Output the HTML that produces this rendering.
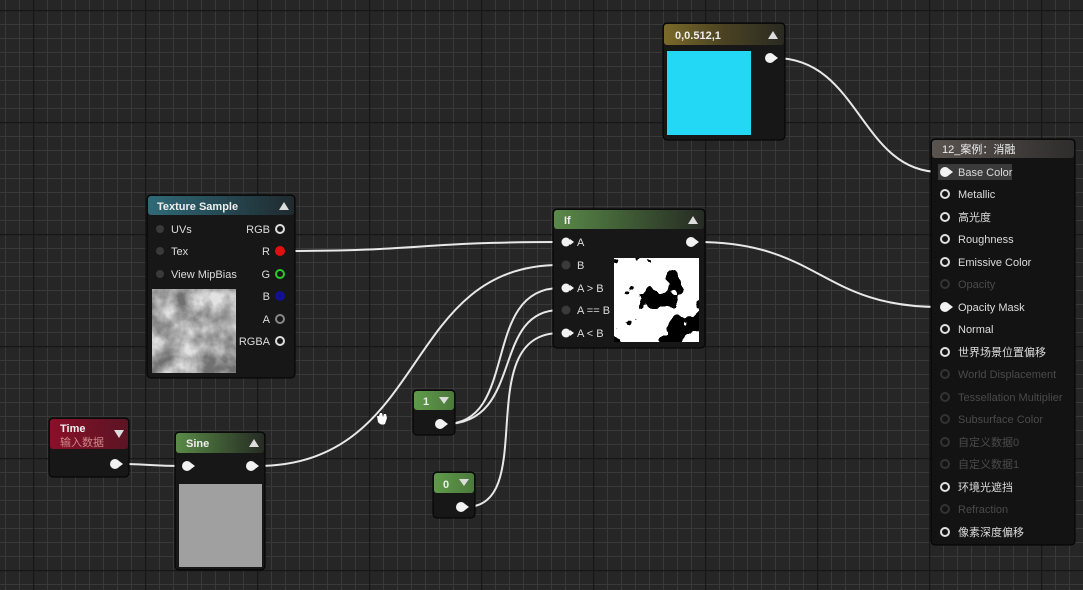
<!DOCTYPE html>
<html><head><meta charset="utf-8"><style>
html,body{margin:0;padding:0;background:#262626;overflow:hidden}
svg{display:block}
text{font-family:"Liberation Sans","Noto Sans CJK SC",sans-serif;font-size:11px;fill:#dcdcdc}
.t{font-weight:bold;font-size:11px;fill:#eee}
.dim{fill:#4a4a4a}
.w{fill:none;stroke:#e8e8e8;stroke-width:2}
</style></head><body>
<svg width="1083" height="590" viewBox="0 0 1083 590" xmlns="http://www.w3.org/2000/svg">
<defs>
<pattern id="g" x="5" y="10" width="14" height="14" patternUnits="userSpaceOnUse"><path d="M0 0.5H14M0.5 0V14" stroke="#393939" stroke-width="1" fill="none"/></pattern>
<pattern id="G" x="33" y="10" width="112" height="112" patternUnits="userSpaceOnUse"><path d="M0 0.5H112M0.5 0V112" stroke="#171717" stroke-width="1.5" fill="none"/></pattern>
<filter id="cloud" x="0" y="0" width="100%" height="100%"><feTurbulence type="fractalNoise" baseFrequency="0.045" numOctaves="4" seed="3"/><feColorMatrix type="matrix" values="0 0 0 0 0  0 0 0 0 0  0 0 0 0 0  1.2 0 0 0 0"/><feComponentTransfer><feFuncA type="linear" slope="1.6" intercept="-0.45"/></feComponentTransfer></filter>
<filter id="mask" x="0" y="0" width="100%" height="100%"><feTurbulence type="fractalNoise" baseFrequency="0.035" numOctaves="3" seed="7"/><feColorMatrix type="matrix" values="0 0 0 0 0  0 0 0 0 0  0 0 0 0 0  1 0 0 0 0"/><feComponentTransfer><feFuncA type="discrete" tableValues="0 0 0 0 0 0 1 1 1 1"/></feComponentTransfer></filter>
<linearGradient id="hgold" x1="0" x2="1"><stop offset="0" stop-color="#7a6a2a"/><stop offset=".5" stop-color="#4a4222"/><stop offset="1" stop-color="#2a2a22"/></linearGradient>
<linearGradient id="hteal" x1="0" x2="1"><stop offset="0" stop-color="#2f6a78"/><stop offset=".6" stop-color="#24434c"/><stop offset="1" stop-color="#202a2e"/></linearGradient>
<linearGradient id="hgreen" x1="0" x2="1"><stop offset="0" stop-color="#5a8a48"/><stop offset=".5" stop-color="#3e5a34"/><stop offset="1" stop-color="#262b24"/></linearGradient>
<linearGradient id="hgreen2" x1="0" x2="1"><stop offset="0" stop-color="#5f9a4a"/><stop offset="1" stop-color="#4c7a3c"/></linearGradient>
<linearGradient id="hred" x1="0" x2="1"><stop offset="0" stop-color="#8a1028"/><stop offset="1" stop-color="#5a1424"/></linearGradient>
<linearGradient id="hgray" x1="0" x2="1"><stop offset="0" stop-color="#5a5450"/><stop offset="1" stop-color="#2e2c2c"/></linearGradient>
</defs>
<rect width="1083" height="590" fill="#262626"/>
<rect width="1083" height="590" fill="url(#g)"/>
<rect width="1083" height="590" fill="url(#G)"/>

<path class="w" d="M775 58 C860 58 860 172 940 172"/>
<path class="w" d="M286 251 C420 251 420 242 560 242"/>
<path class="w" d="M697 242 C820 242 820 307 940 307"/>
<path class="w" d="M120 464 C150 464 150 466 182 466"/>
<path class="w" d="M256 466 C430 466 400 265 560 265"/>
<path class="w" d="M445 424 C520 424 480 288 560 288"/>
<path class="w" d="M445 424 C525 424 490 310 560 310"/>
<path class="w" d="M466 507 C540 507 470 333 560 333"/>

<rect x="663" y="23" width="122" height="117" rx="4" fill="#171717" stroke="#000"/>
<rect x="664" y="24" width="120" height="21" rx="3" fill="url(#hgold)"/>
<text x="675" y="39" class="t">0,0.512,1</text>
<path d="M768 39 L778 39 L773 31Z" fill="#ddd"/>
<rect x="667" y="51" width="84" height="84" fill="#22d8f5"/>

<rect x="147" y="195" width="148" height="183" rx="4" fill="#171717" stroke="#000"/>
<rect x="148" y="196" width="146" height="19" rx="3" fill="url(#hteal)"/>
<text x="157" y="210" class="t">Texture Sample</text>
<path d="M279 210 L289 210 L284 202Z" fill="#ddd"/>
<text x="171" y="233">UVs</text><text x="171" y="255">Tex</text><text x="171" y="278">View MipBias</text>
<text x="270" y="233" text-anchor="end">RGB</text><text x="270" y="255" text-anchor="end">R</text><text x="270" y="278" text-anchor="end">G</text><text x="270" y="300" text-anchor="end">B</text><text x="270" y="323" text-anchor="end">A</text><text x="270" y="345" text-anchor="end">RGBA</text>
<rect x="152" y="289" width="84" height="84" fill="#e2e2e2"/>
<rect x="152" y="289" width="84" height="84" fill="#000" filter="url(#cloud)" opacity="0.5"/>

<rect x="553" y="209" width="152" height="139" rx="4" fill="#171717" stroke="#000"/>
<rect x="554" y="210" width="150" height="19" rx="3" fill="url(#hgreen)"/>
<text x="564" y="224" class="t">If</text>
<path d="M688 224 L698 224 L693 216Z" fill="#ddd"/>
<text x="577" y="246">A</text><text x="577" y="269">B</text><text x="577" y="292">A &gt; B</text><text x="577" y="314">A == B</text><text x="577" y="337">A &lt; B</text>
<rect x="614" y="258" width="85" height="84" fill="#fff"/>
<rect x="614" y="258" width="85" height="84" fill="#000" filter="url(#mask)"/>

<rect x="931" y="139" width="144" height="406" rx="4" fill="#131313" stroke="#000"/>
<rect x="932" y="140" width="142" height="18" rx="3" fill="url(#hgray)"/>
<text x="942" y="153" class="t" style="font-weight:normal">12_案例：消融</text>
<rect x="938" y="164" width="74" height="16" fill="#3a3a3a"/>
<g>
<text x="958" y="176">Base Color</text>
<text x="958" y="198">Metallic</text>
<text x="958" y="221">高光度</text>
<text x="958" y="243">Roughness</text>
<text x="958" y="266">Emissive Color</text>
<text x="958" y="288" class="dim">Opacity</text>
<text x="958" y="311">Opacity Mask</text>
<text x="958" y="333">Normal</text>
<text x="958" y="356">世界场景位置偏移</text>
<text x="958" y="378" class="dim">World Displacement</text>
<text x="958" y="401" class="dim">Tessellation Multiplier</text>
<text x="958" y="423" class="dim">Subsurface Color</text>
<text x="958" y="446" class="dim">自定义数据0</text>
<text x="958" y="468" class="dim">自定义数据1</text>
<text x="958" y="491">环境光遮挡</text>
<text x="958" y="513" class="dim">Refraction</text>
<text x="958" y="536">像素深度偏移</text>
</g>

<rect x="49" y="418" width="80" height="59" rx="4" fill="#171717" stroke="#000"/>
<rect x="50" y="419" width="78" height="30" rx="3" fill="url(#hred)"/>
<text x="60" y="432" class="t">Time</text>
<text x="60" y="446" style="fill:#c88">输入数据</text>
<path d="M114 430 L124 430 L119 438Z" fill="#ddd"/>

<rect x="175" y="432" width="90" height="138" rx="4" fill="#171717" stroke="#000"/>
<rect x="176" y="433" width="88" height="20" rx="3" fill="url(#hgreen)"/>
<text x="186" y="447" class="t">Sine</text>
<path d="M249 447 L259 447 L254 439Z" fill="#ddd"/>
<rect x="179" y="484" width="83" height="83" fill="#a0a0a0"/>

<rect x="413" y="390" width="42" height="45" rx="4" fill="#171717" stroke="#000"/>
<rect x="414" y="391" width="40" height="19" rx="3" fill="url(#hgreen2)"/>
<text x="423" y="405" class="t">1</text>
<path d="M439 397 L449 397 L444 404Z" fill="#ddd"/>
<rect x="433" y="472" width="42" height="46" rx="4" fill="#171717" stroke="#000"/>
<rect x="434" y="473" width="40" height="20" rx="3" fill="url(#hgreen2)"/>
<text x="443" y="488" class="t">0</text>
<path d="M459 479 L469 479 L464 486Z" fill="#ddd"/>

<g fill="#f2f2f2">
<circle cx="770" cy="58" r="5"/><path d="M774 55 L778 58 L774 61Z"/>
<circle cx="566" cy="242" r="4.5"/><path d="M570 239 L574 242 L570 245Z"/>
<circle cx="566" cy="288" r="4.5"/><path d="M570 285 L574 288 L570 291Z"/>
<circle cx="566" cy="333" r="4.5"/><path d="M570 330 L574 333 L570 336Z"/>
<circle cx="691" cy="242" r="5"/><path d="M695 239 L699 242 L695 245Z"/>
<circle cx="945" cy="172" r="5"/><path d="M949 169 L953 172 L949 175Z"/>
<circle cx="945" cy="307" r="5"/><path d="M949 304 L953 307 L949 310Z"/>
<circle cx="115" cy="464" r="5"/><path d="M119 461 L123 464 L119 467Z"/>
<circle cx="187" cy="466" r="5"/><path d="M191 463 L195 466 L191 469Z"/>
<circle cx="251" cy="466" r="5"/><path d="M255 463 L259 466 L255 469Z"/>
<circle cx="440" cy="424" r="5"/><path d="M444 421 L448 424 L444 427Z"/>
<circle cx="461" cy="507" r="5"/><path d="M465 504 L469 507 L465 510Z"/>
</g>
<g fill="#3a3a3a">
<circle cx="566" cy="265" r="4.5"/><circle cx="566" cy="310" r="4.5"/>
<circle cx="160" cy="229" r="4"/><circle cx="160" cy="251" r="4"/><circle cx="160" cy="274" r="4"/>
</g>
<g fill="none" stroke-width="2">
<circle cx="280" cy="229" r="4" stroke="#ddd"/>
<circle cx="280" cy="274" r="4" stroke="#2ec82e"/>
<circle cx="280" cy="319" r="4" stroke="#888"/>
<circle cx="280" cy="341" r="4" stroke="#ddd"/>
</g>
<circle cx="280" cy="251" r="5" fill="#e01010"/>
<circle cx="280" cy="296" r="5" fill="#101090"/>
<g fill="none" stroke="#e0e0e0" stroke-width="2">
<circle cx="945" cy="194" r="4"/><circle cx="945" cy="217" r="4"/><circle cx="945" cy="239" r="4"/><circle cx="945" cy="262" r="4"/>
<circle cx="945" cy="329" r="4"/><circle cx="945" cy="352" r="4"/><circle cx="945" cy="487" r="4"/><circle cx="945" cy="532" r="4"/>
</g>
<g fill="none" stroke="#333" stroke-width="2">
<circle cx="945" cy="284" r="4"/><circle cx="945" cy="374" r="4"/><circle cx="945" cy="397" r="4"/><circle cx="945" cy="419" r="4"/><circle cx="945" cy="442" r="4"/><circle cx="945" cy="464" r="4"/><circle cx="945" cy="509" r="4"/>
</g>
<path d="M377 416 L378 422 Q381 426 385 424 L387 418 L386 414 L384 414 L383 417 L382 413 L380 413 L379 416 Z" fill="#fff"/>
</svg>
</body></html>
